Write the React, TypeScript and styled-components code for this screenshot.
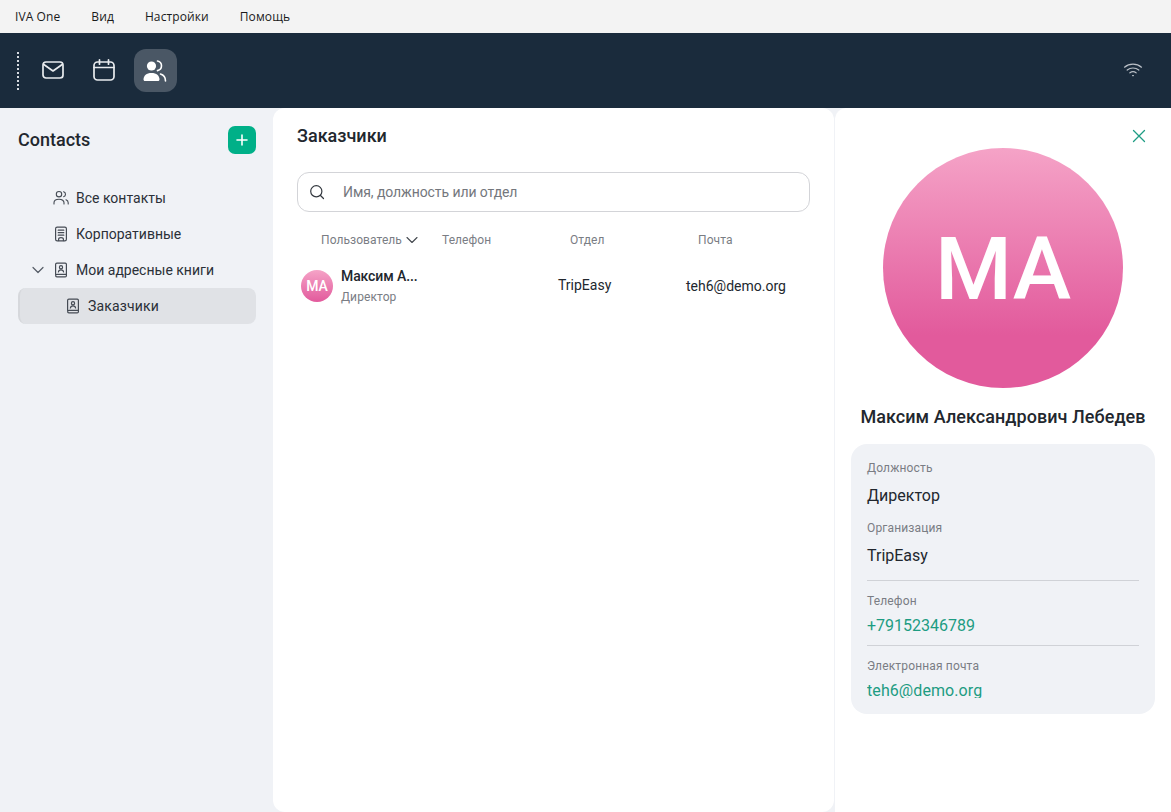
import React from "react";
import styled, { createGlobalStyle } from "styled-components";

const Global = createGlobalStyle`
  html, body { margin: 0; padding: 0; height: 100%; background: #f0f2f6; }
  body { font-family: Roboto, "Liberation Sans", sans-serif; overflow: hidden; }
  #root { height: 100%; }
`;

const Page = styled.div`
  width: 1171px; height: 812px; display: flex; flex-direction: column; overflow: hidden;
`;
const MenuBar = styled.div`
  height: 33px; background: #f3f3f3; display: flex; align-items: center; padding: 0 0 0 15px; gap: 31px;
  font-family: "Open Sans", "Noto Sans", sans-serif; font-size: 12px; color: #1a1a1a; letter-spacing: 0.1px;
`;
const Header = styled.header`
  height: 75px; background: #1a2b3c; display: flex; align-items: center; padding: 0 28px 0 17px;
`;
const Grip = styled.div`
  width: 0; height: 38px; border-left: 2px dotted #d5dae0; margin-right: 13px;
`;
const NavButton = styled.div<{ $active?: boolean }>`
  width: 43px; height: 43px; box-sizing: border-box; padding: 0 1px 2px 0; border-radius: 12px; display: flex; align-items: center; justify-content: center;
  margin-right: 8px; background: ${(p) => (p.$active ? "#4a5765" : "transparent")};
  color: #fff;
`;
const HeaderSpacer = styled.div`flex: 1;`;
const WifiIcon = styled.span`display: flex; margin-top: -2px;`;
const Body = styled.div`flex: 1; display: flex; min-height: 0;`;
const Sidebar = styled.aside`
  width: 273px; flex: none; padding: 18px 17px 0 18px; box-sizing: border-box;
`;
const SideHead = styled.div`
  display: flex; justify-content: space-between; align-items: center; height: 28px; margin-bottom: 26px;
`;
const SideTitle = styled.div`font-size: 18px; font-weight: 500; color: #22272e; margin-top: -2px;`;
const AddButton = styled.div`
  width: 28px; height: 28px; border-radius: 7px; background: #00b088; color: #fff;
  display: flex; align-items: center; justify-content: center;
`;
const TreeRow = styled.div<{ $indent: number; $selected?: boolean }>`
  height: 36px; display: flex; align-items: center; padding-left: ${(p) => p.$indent}px; gap: 7px;
  font-size: 14px; color: #2b3038; border-radius: 8px;
  background: ${(p) => (p.$selected ? "#e0e2e6" : "transparent")};
  ${(p) => (p.$selected ? "border-left: 2px solid #d6d8dc; box-sizing: border-box; letter-spacing: 0.15px;" : "")}
`;
const TreeChevron = styled.span`
  width: 14px; display: flex; color: #555c66;
`;
const TreeIcon = styled.span`display: flex; color: #454b54; width: 16px; justify-content: center;`;

const Main = styled.main`
  width: 561px; flex: none; background: #fff; border-radius: 12px; padding: 17px 24px 0; box-sizing: border-box;
`;
const MainTitle = styled.h1`
  margin: 0; font-size: 18px; font-weight: 500; line-height: 21px; color: #22272e;
`;
const Search = styled.div`
  margin-top: 26px; width: 513px; height: 40px; box-sizing: border-box; border: 1px solid #d3d4d8; border-radius: 12px;
  display: flex; align-items: center; padding-left: 11px; gap: 18px; font-size: 14px; color: #74777d; letter-spacing: -0.08px;
`;
const SearchIcon = styled.span`display: flex; color: #33383f;`;
const HeadRow = styled.div`
  display: grid; grid-template-columns: 121px 128px 128px 1fr; margin-top: 20px; padding-left: 24px; height: 16px;
  align-items: center; font-size: 12px; color: #7a7d84; letter-spacing: 0.07px;
`;
const HeadCell = styled.div`display: flex; align-items: center; gap: 4px; white-space: nowrap;`;
const DataRow = styled.div`
  display: grid; grid-template-columns: 32px 225px 128px 1fr; margin-top: 18px; padding-left: 4px; height: 40px; align-items: center;
`;
const Avatar = styled.div`
  width: 32px; height: 32px; border-radius: 50%; background: linear-gradient(#f5a3c7, #e25a9c);
  color: #fff; font-size: 14px; font-weight: 500; display: flex; align-items: center; justify-content: center;
`;
const NameCell = styled.div`padding-left: 8px; display: flex; flex-direction: column; gap: 6px; min-width: 0;`;
const Name = styled.div`
  white-space: nowrap; letter-spacing: -0.1px;
  font-size: 14px; font-weight: 500; line-height: 16px; color: #22272e;
`;
const Role = styled.div`font-size: 12px; line-height: 14px; color: #7a7d84; letter-spacing: 0.1px;`;
const DataCell = styled.div<{ $shift?: number }>`
  font-size: 14px; color: #22272e; margin-top: ${(p) => p.$shift ?? 0}px; white-space: nowrap;
`;

const Detail = styled.section`
  flex: 1; background: #fff; border-left: 1px solid #f0f2f6; border-radius: 12px 0 0 0; margin-left: 0; padding: 0 16px;
  box-sizing: border-box; display: flex; flex-direction: column; align-items: center; position: relative;
`;
const CloseButton = styled.div`
  position: absolute; top: 20px; right: 24px; color: #1f9d84; display: flex;
`;
const BigAvatar = styled.div`
  margin-top: 40px; width: 240px; height: 240px; border-radius: 50%; background: linear-gradient(#f5a3c7, #e25a9c 78%);
  color: #fff; font-size: 88px; font-weight: 500; display: flex; align-items: center; justify-content: center;
`;
const FullName = styled.div`
  margin-top: 18px; font-size: 18px; font-weight: 500; line-height: 21px; color: #22272e; letter-spacing: 0.06px; white-space: nowrap;
`;
const Card = styled.div`
  margin-top: 17px; width: 304px; height: 270px; box-sizing: border-box; background: #f0f2f6; border-radius: 16px; padding: 16px 16px 0;
`;
const Label = styled.div`font-size: 12px; line-height: 16px; color: #7a7d84; letter-spacing: 0.15px;`;
const Value = styled.div<{ $gap: number; $after: number }>`
  font-size: 16px; line-height: 20px; color: #22272e; margin-top: ${(p) => p.$gap}px; margin-bottom: ${(p) => p.$after}px;
`;
const LinkValue = styled.div<{ $after?: number }>`
  font-size: 16px; line-height: 20px; color: #1d9c82; margin-top: 7px; margin-bottom: ${(p) => p.$after ?? 0}px;
`;
const ClippedLink = styled(LinkValue)`
  height: 16px; overflow: hidden; letter-spacing: 0.08px; line-height: 17px; margin-top: 8px;
`;
const Divider = styled.hr`
  border: 0; border-top: 1px solid #d0d2d7; margin: 0 0 12px;
`;

const BookIcon = () => (
  <svg width="14" height="16" viewBox="0 0 14 16" fill="none" stroke="currentColor" strokeWidth="1.2" strokeLinecap="round" strokeLinejoin="round">
    <path d="M1.6 12.6V2.4c0-.7.6-1.3 1.3-1.3h8.300c.7 0 1.200.5 1.200 1.200v11.400c0 .7-.5 1.200-1.200 1.200H2.900c-.7 0-1.300-.6-1.300-1.300s.6-1.300 1.300-1.300h9.500" />
    <circle cx="7" cy="5.200" r="1.600" />
    <path d="M4.400 10c.2-1.400 1.300-2.100 2.600-2.100s2.400.7 2.600 2.100" />
  </svg>
);
const CorpIcon = () => (
  <svg width="14" height="16" viewBox="0 0 14 16" fill="none" stroke="currentColor" strokeWidth="1.2" strokeLinecap="round" strokeLinejoin="round">
    <rect x="1.600" y="1.100" width="10.800" height="13.800" rx="1.600" />
    <path d="M4.200 4.200h5.600M4.200 6.700h5.600M4.200 9.200h5.600" />
    <path d="M4.600 14.600v-1.400c0-1 .8-1.600 2.400-1.600s2.400.6 2.400 1.600v1.400" />
  </svg>
);
const PeopleThin = () => (
  <svg width="16" height="16" viewBox="0 0 16 16" fill="none" stroke="currentColor" strokeWidth="1.100" strokeLinecap="round">
    <circle cx="6" cy="4.200" r="2.700" />
    <path d="M1 14v-1.200C1 10.800 2.800 9.300 6 9.300s5 1.500 5 3.500V14" />
    <path d="M10.600 1.700c1.100.3 1.900 1.300 1.900 2.500s-.8 2.200-1.900 2.500M13 9.700c1.300.5 2.200 1.600 2.200 3V14" />
  </svg>
);

export default function App() {
  return (
    <Page>
      <Global />
      <MenuBar>
        <span>IVA One</span>
        <span>Вид</span>
        <span>Настройки</span>
        <span>Помощь</span>
      </MenuBar>
      <Header>
        <Grip />
        <NavButton>
          <svg width="24" height="24" viewBox="0 0 24 24" fill="none" stroke="#e8ebee" strokeWidth="1.700" strokeLinejoin="round" strokeLinecap="round">
            <rect x="2" y="4" width="20" height="16" rx="3" />
            <path d="M2.800 6.500 12 13l9.200-6.500" />
          </svg>
        </NavButton>
        <NavButton>
          <svg width="24" height="24" viewBox="0 0 24 24" fill="none" stroke="#e8ebee" strokeWidth="1.700" strokeLinecap="round" strokeLinejoin="round">
            <rect x="2" y="4" width="20" height="18" rx="3.500" />
            <path d="M2 9.500h20M7.500 1.800v4.400M16.500 1.800v4.400" />
          </svg>
        </NavButton>
        <NavButton $active>
          <svg width="24" height="24" viewBox="0 0 24 24" fill="#fff">
            <circle cx="8.500" cy="8" r="4.600" />
            <path d="M.5 21.500c0-3.800 3-6.500 8-6.500s8 2.700 8 6.500c0 .9-.6 1.500-1.400 1.500H1.900C1.100 23 .5 22.400.5 21.500Z" />
            <path d="M14.500 3c2.300.5 4 2.500 4 4.800s-1.700 4.300-4 4.800M17.500 16c3 .9 5 3.600 5 7" fill="none" stroke="#fff" strokeWidth="1.600" strokeLinecap="round" />
          </svg>
        </NavButton>
        <HeaderSpacer />
        <WifiIcon>
          <svg width="20" height="16" viewBox="0 0 20 16" fill="none" stroke="#b9bfc6" strokeWidth="1.200" strokeLinecap="round">
            <path d="M1.500 5.200C6.300 1.200 13.700 1.200 18.500 5.200" />
            <path d="M4.200 8C7.500 5.300 12.500 5.300 15.800 8" />
            <path d="M6.900 10.800c1.800-1.400 4.400-1.400 6.200 0" />
            <path d="M9.600 13.600h.8" />
          </svg>
        </WifiIcon>
      </Header>
      <Body>
        <Sidebar>
          <SideHead>
            <SideTitle>Contacts</SideTitle>
            <AddButton>
              <svg width="12" height="12" viewBox="0 0 12 12" stroke="#fff" strokeWidth="1.600" strokeLinecap="round">
                <path d="M6 1v10M1 6h10" />
              </svg>
            </AddButton>
          </SideHead>
          <TreeRow $indent={35}>
            <TreeIcon><PeopleThin /></TreeIcon>
            Все контакты
          </TreeRow>
          <TreeRow $indent={35}>
            <TreeIcon><CorpIcon /></TreeIcon>
            Корпоративные
          </TreeRow>
          <TreeRow $indent={14}>
            <TreeChevron>
              <svg width="12" height="8" viewBox="0 0 12 8" fill="none" stroke="currentColor" strokeWidth="1.200" strokeLinecap="round" strokeLinejoin="round">
                <path d="M1 1.500 6 6.500l5-5" />
              </svg>
            </TreeChevron>
            <TreeIcon><BookIcon /></TreeIcon>
            Мои адресные книги
          </TreeRow>
          <TreeRow $indent={45} $selected>
            <TreeIcon><BookIcon /></TreeIcon>
            Заказчики
          </TreeRow>
        </Sidebar>
        <Main>
          <MainTitle>Заказчики</MainTitle>
          <Search>
            <SearchIcon>
              <svg width="16" height="16" viewBox="0 0 16 16" fill="none" stroke="currentColor" strokeWidth="1.200" strokeLinecap="round">
                <circle cx="7.300" cy="7.300" r="5.600" />
                <path d="M11.500 11.500 14.500 14.500" />
              </svg>
            </SearchIcon>
            Имя, должность или отдел
          </Search>
          <HeadRow>
            <HeadCell>
              Пользователь
              <svg width="12" height="8" viewBox="0 0 12 8" fill="none" stroke="#44494f" strokeWidth="1.100" strokeLinecap="round" strokeLinejoin="round">
                <path d="M1 1.500 6 6.500l5-5" />
              </svg>
            </HeadCell>
            <HeadCell>Телефон</HeadCell>
            <HeadCell>Отдел</HeadCell>
            <HeadCell>Почта</HeadCell>
          </HeadRow>
          <DataRow>
            <Avatar>MA</Avatar>
            <NameCell>
              <Name>Максим А...</Name>
              <Role>Директор</Role>
            </NameCell>
            <DataCell $shift={-2}>TripEasy</DataCell>
            <DataCell>teh6@demo.org</DataCell>
          </DataRow>
        </Main>
        <Detail>
          <CloseButton>
            <svg width="16" height="16" viewBox="0 0 16 16" stroke="currentColor" strokeWidth="1.300" strokeLinecap="round">
              <path d="M2.500 2.500 13.500 13.500M13.500 2.500 2.500 13.500" />
            </svg>
          </CloseButton>
          <BigAvatar>MA</BigAvatar>
          <FullName>Максим Александрович Лебедев</FullName>
          <Card>
            <Label>Должность</Label>
            <Value $gap={10} $after={14}>Директор</Value>
            <Label>Организация</Label>
            <Value $gap={10} $after={14}>TripEasy</Value>
            <Divider />
            <Label>Телефон</Label>
            <LinkValue $after={9}>+79152346789</LinkValue>
            <Divider />
            <Label>Электронная почта</Label>
            <ClippedLink>teh6@demo.org</ClippedLink>
          </Card>
        </Detail>
      </Body>
    </Page>
  );
}
